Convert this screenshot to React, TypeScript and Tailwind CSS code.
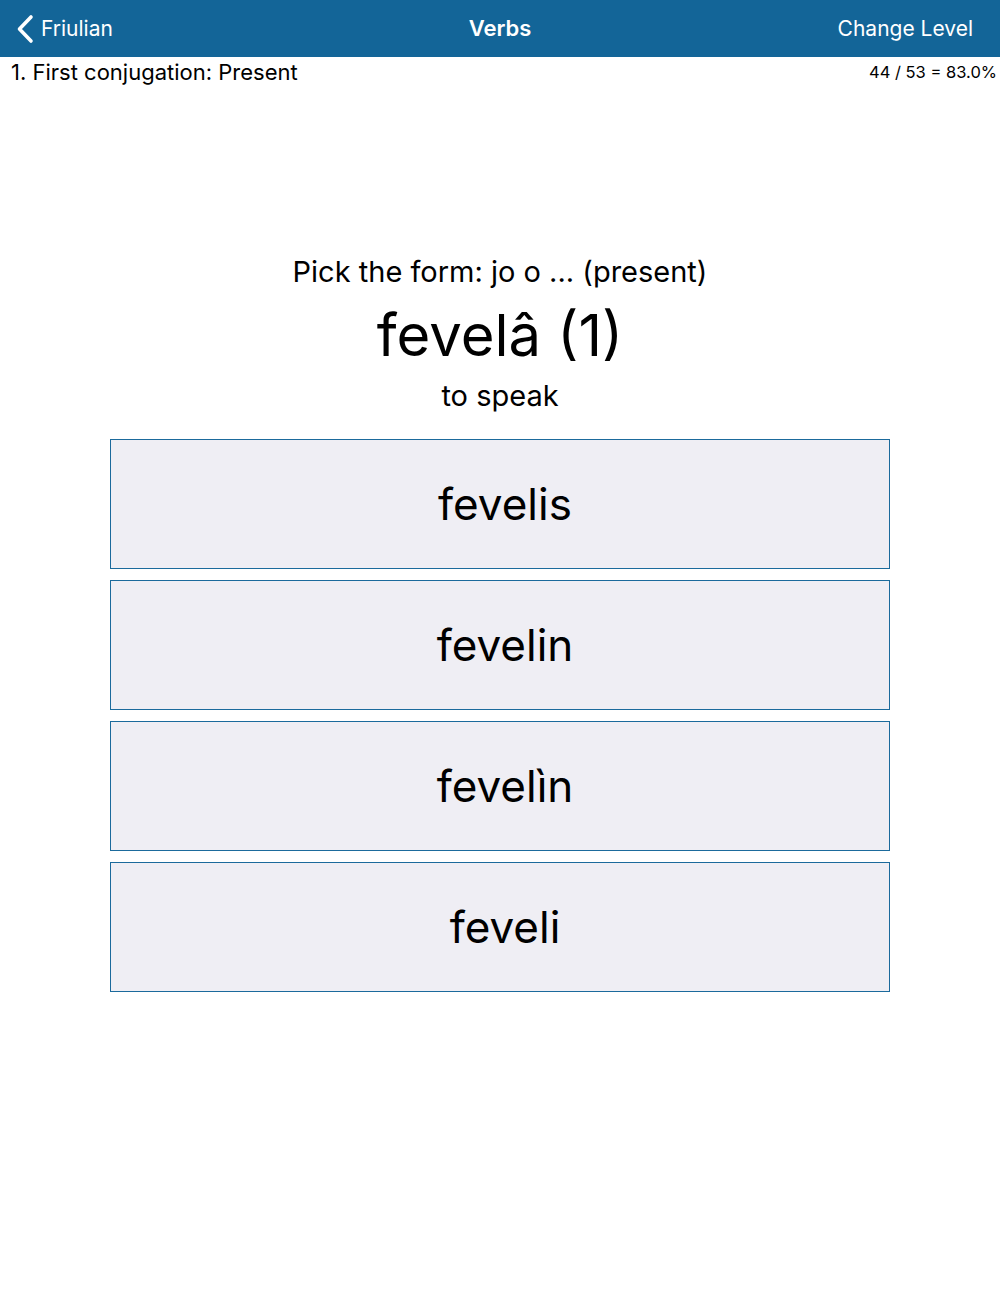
import React from 'react'

const options = ['fevelis', 'fevelin', 'fevelìn', 'feveli']

function BackChevron() {
  return (
    <svg className="w-[18px] h-[30px]" viewBox="0 0 18 30" fill="none" stroke="currentColor">
      <path d="M15 3L3.5 15 15 27" strokeWidth={3.6} strokeLinecap="round" strokeLinejoin="round" />
    </svg>
  )
}

export default function App() {
  return (
    <div className="w-[1000px] h-[1307px] bg-white text-black font-['Inter','Liberation_Sans',sans-serif]">
      {/* Nav bar */}
      <div className="h-[57px] bg-[#136598] text-white flex items-center justify-between relative">
        <div className="flex items-center gap-[7px] pl-[16px] text-[21px]">
          <BackChevron />
          <span>Friulian</span>
        </div>
        <div className="absolute left-0 right-0 text-center text-[22px] font-semibold pointer-events-none">Verbs</div>
        <div className="pr-[27px] text-[21px]">Change Level</div>
      </div>

      {/* Lesson info */}
      <div className="flex items-center justify-between h-[30px] pl-[11px] pr-[3px]">
        <span className="text-[22px]">1. First conjugation: Present</span>
        <span className="text-[16.5px]">44 / 53 = 83.0%</span>
      </div>

      {/* Question */}
      <div className="flex flex-col items-center pt-[166px]">
        <div className="text-[29px] leading-[38px]">Pick the form: jo o ... (present)</div>
        <div className="text-[58px] leading-[74px] mt-[7px]">fevelâ (1)</div>
        <div className="text-[29px] leading-[38px] mt-[5px]">to speak</div>
      </div>

      {/* Answers */}
      <div className="flex flex-col gap-[11px] px-[110px] mt-[24px]">
        {options.map(o => (
          <button
            key={o}
            className="h-[130px] bg-[#efeef4] border-[1.5px] border-[#1b6a9c] flex items-center justify-center text-[44px] pl-[10px]"
          >
            {o}
          </button>
        ))}
      </div>
    </div>
  )
}
